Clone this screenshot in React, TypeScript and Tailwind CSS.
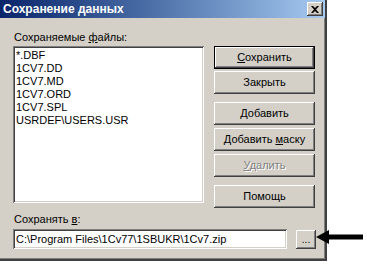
import React from "react";

const raised =
  "bg-[#d4d0c8] shadow-[inset_-1px_-1px_#404040,inset_1px_1px_#ffffff,inset_-2px_-2px_#808080,inset_2px_2px_#d4d0c8]";
const sunken =
  "bg-white shadow-[inset_1px_1px_#808080,inset_-1px_-1px_#ffffff,inset_2px_2px_#404040,inset_-2px_-2px_#d4d0c8]";

function Key({ children }: { children: React.ReactNode }) {
  return <span className="underline underline-offset-[1px]">{children}</span>;
}

function Btn({
  children,
  main,
  disabled,
  className = "",
}: {
  children: React.ReactNode;
  main?: boolean;
  disabled?: boolean;
  className?: string;
}) {
  return (
    <div className={`${main ? "border border-black" : ""} ${className}`}>
      <div
        className={`${raised} flex items-center justify-center ${main ? "h-[21px]" : "h-[23px]"} ${
          disabled ? "text-[#808080] [text-shadow:1px_1px_#ffffff]" : "text-black"
        }`}
      >
        <span>{children}</span>
      </div>
    </div>
  );
}

const files = ["*.DBF", "1CV7.DD", "1CV7.MD", "1CV7.ORD", "1CV7.SPL", "USRDEF\\USERS.USR"];

export default function App() {
  return (
    <div className="relative w-[367px] h-[264px] bg-white text-[11px] leading-[13px] font-['Liberation_Sans',Arial,sans-serif]">
      <div className="w-[327px] h-[261px] bg-[#d4d0c8] border-r-2 border-b-2 border-r-[#404040] border-b-[#404040] shadow-[inset_-1px_-1px_#808080] flex flex-col">
        <div className="h-[18px] flex items-center justify-between pl-[3px] pr-[2px] bg-gradient-to-r from-[#0a246a] to-[#a6caf0]">
          <span className="text-white font-bold text-[12px]">Сохранение данных</span>
          <div className={`${raised} w-[16px] h-[14px] flex items-center justify-center`}>
            <svg width="8" height="7" viewBox="0 0 8 7">
              <path d="M0 0h2l2 2 2-2h2L5 3.5 8 7H6L4 5 2 7H0l3-3.5z" fill="#000" />
            </svg>
          </div>
        </div>

        <div className="flex gap-[10px] pl-[13px] pt-[13px]">
          <div className="w-[191px]">
            <div className="pl-[1px] h-[15px]">
              Сохраняемые <Key>ф</Key>айлы:
            </div>
            <div className={`${sunken} h-[157px] pt-[3px] pl-[3px]`}>
              {files.map((f) => (
                <div key={f} className="h-[13px]">
                  {f}
                </div>
              ))}
            </div>
          </div>

          <div className="w-[101px] pt-[15px] flex flex-col">
            <Btn main>
              <Key>С</Key>охранить
            </Btn>
            <Btn className="mt-[2px]">Закрыть</Btn>
            <Btn className="mt-[8px]">
              <Key>Д</Key>обавить
            </Btn>
            <Btn className="mt-[3px]">
              Добавить <Key>м</Key>аску
            </Btn>
            <Btn className="mt-[3px]" disabled>
              <Key>У</Key>далить
            </Btn>
            <Btn className="mt-[8px]">Помощь</Btn>
          </div>
        </div>

        <div className="pl-[14px] mt-[3px] h-[15px] flex items-end">
          <span>
            Сохранять <Key>в</Key>:
          </span>
        </div>
        <div className="flex items-center pl-[13px] mt-[3px]">
          <div className={`${sunken} w-[274px] h-[20px] flex items-center pl-[3px]`}>
            C:\Program Files\1Cv77\1SBUKR\1Cv7.zip
          </div>
          <div className={`${raised} ml-[9px] w-[20px] h-[19px] flex items-end justify-center pb-[4px] text-[10px] leading-none`}>
            ...
          </div>
        </div>
      </div>

      <svg className="absolute left-[316px] top-[230px]" width="48" height="14" viewBox="0 0 48 14">
        <path d="M0 7 L13 0 V4.5 H47 V9.5 H13 V14 Z" fill="#000" />
      </svg>
    </div>
  );
}
